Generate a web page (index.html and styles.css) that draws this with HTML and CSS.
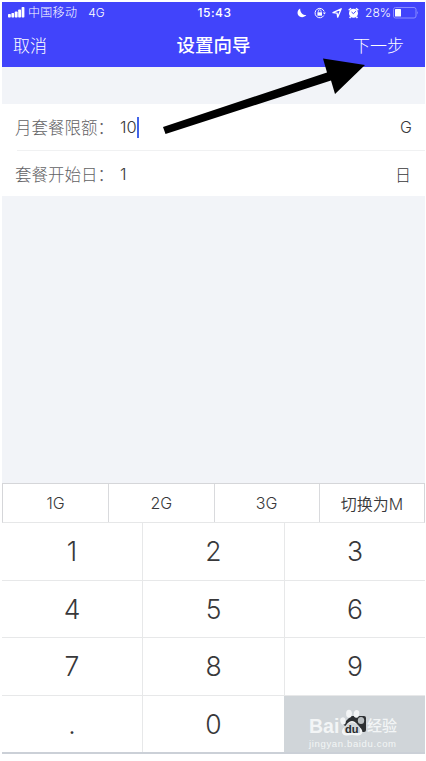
FILE: index.html
```html
<!DOCTYPE html>
<html lang="zh-CN">
<head>
<meta charset="utf-8">
<title>设置向导</title>
<link rel="stylesheet" href="styles.css">
</head>
<body>
<main class="screen">
  <header class="header">
    <div class="status">
      <div class="status-left">
        <svg class="signal" width="17" height="11" viewBox="0 0 17 11" fill="#fff"><rect x="0" y="7" width="2.8" height="3.5" rx=".7"/><rect x="3.4" y="6" width="2.8" height="4.5" rx=".7"/><rect x="6.8" y="4.5" width="2.8" height="6" rx=".7"/><rect x="10.2" y="2.5" width="2.8" height="8" rx=".7"/><rect x="13.6" y="0" width="2.8" height="10.5" rx=".7"/></svg>
        <span class="carrier">中国移动</span>
        <span class="network">4G</span>
      </div>
      <div class="clock">15:43</div>
      <div class="status-right">
        <svg class="moon" width="10" height="10" viewBox="0 0 10 10"><path d="M3.2.4C.8 1.5-.1 4.400 1 6.700 2.300 9.600 6.900 10.300 9.300 7.100 5.900 7.300 2.900 4.200 3.200.4Z" fill="#fff"/></svg>
        <svg class="lock" width="12" height="12" viewBox="0 0 12 12" fill="none" stroke="#fff"><path d="M9.800 8.500A4.700 4.700 0 1 1 10.200 4.500"/><path d="M8.900 5.500h3L10.400 7.600Z" fill="#fff" stroke="none"/><rect x="3.400" y="5.300" width="4.600" height="3.400" fill="#fff" stroke="none"/><path d="M4.300 5.500V4.200a1.400 1.400 0 0 1 2.800 0V5.500" stroke-width=".8"/></svg>
        <svg class="locate" width="10" height="10" viewBox="0 0 10 10"><path d="M9.200.8 5.700 9.200 5.100 5.200 1 4.600Z" fill="none" stroke="#fff" stroke-width="1.300" stroke-linejoin="round"/></svg>
        <svg class="alarm" width="11" height="12" viewBox="0 0 11 12"><circle cx="5.500" cy="6.300" r="4.500" fill="#fff"/><path d="M.7 3.200 3 1.200M10.300 3.200 8 1.200M2.600 9.800 1.600 11M8.400 9.800 9.400 11" stroke="#fff" stroke-width="1.500"/><path d="M3.500 5 5.500 6.700 7.800 4.200" fill="none" stroke="#4144fb" stroke-width="1"/></svg>
        <span class="percent">28%</span>
        <svg class="battery" width="26" height="12" viewBox="0 0 26 12"><rect x=".5" y=".5" width="22.500" height="10.500" rx="2" fill="none" stroke="#8a8cff"/><rect x="2" y="2" width="6" height="7.500" rx=".6" fill="#fff"/><path d="M24 4q1.800 1.800 0 3.600Z" fill="#8a8cff"/></svg>
      </div>
    </div>
    <nav class="nav"><span class="cancel">取消</span><h1>设置向导</h1><span class="next">下一步</span></nav>
  </header>
  <section class="form">
    <div class="field"><label>月套餐限额：</label><span class="value">10<i class="caret"></i></span><span class="unit">G</span></div>
    <div class="field"><label class="label-start">套餐开始日：</label><span class="value">1</span><span class="unit unit-day">日</span></div>
  </section>
  <section class="keyboard">
    <div class="presets"><span>1G</span><span>2G</span><span>3G</span><span>切换为M</span></div>
    <div class="keys">
      <span>1</span><span>2</span><span>3</span>
      <span>4</span><span>5</span><span>6</span>
      <span>7</span><span>8</span><span>9</span>
      <span>.</span><span>0</span>
      <div class="delete">
        <svg class="backspace" width="24" height="18" viewBox="0 0 24 18"><path d="M8 1H21Q23 1 23 3V15Q23 17 21 17H8L0 9Z" fill="#2d3033"/></svg>
        <div class="watermark">
          <div class="brand"><span class="bai">Bai</span>
            <svg class="paw" width="27" height="28" viewBox="0 0 27 28" fill="#f3f5f6"><ellipse cx="4" cy="12" rx="2.700" ry="3.700" transform="rotate(-12 4 12)"/><ellipse cx="10" cy="4.700" rx="2.900" ry="4"/><ellipse cx="17.500" cy="4.800" rx="2.800" ry="3.900" transform="rotate(8 17.500 4.800)"/><ellipse cx="22" cy="11.500" rx="3.200" ry="3.500" fill="#b9bec1"/><path d="M13 12C9 12 8 16 5 18.500 1 22 3 27 8 26.500Q13 25.500 18 26.500C24 27 25 22 21 18.500 18 16 17 12 13 12Z"/><path d="M5 19Q9 13.500 13 13.500 18 14 21 18.500V24H6Z" fill="#d2d6d9"/><text x="6" y="23.500" class="du">du</text></svg>
            <span class="experience">经验</span></div>
          <div class="site">jingyan.baidu.com</div>
        </div>
      </div>
    </div>
  </section>
  <svg class="pointer" width="203" height="78" viewBox="0 0 203 78"><path d="M0 69 164 14.500 160 0.500 202 7 172 36 168 22.500 2.500 76Z" fill="#000"/></svg>
</main>
</body>
</html>
```
FILE: styles.css
```css
* { box-sizing: border-box; }
body {
  margin: 0;
  background: #fff;
  color: #38383a;
  font-family: Inter, "Noto Sans CJK SC", sans-serif;
}
.screen {
  position: relative;
  width: 423px;
  height: 752px;
  margin: 2px 0 0 2px;
  display: flex;
  flex-direction: column;
  background: #f2f4f8;
}
.header { height: 65px; background: #4144fb; color: #fff; }
.status {
  height: 21px;
  display: grid;
  grid-template-columns: 1fr 50px 1fr;
  align-items: center;
  font-size: 12px;
  line-height: 20px;
}
.status-left, .status-right { display: flex; align-items: center; }
.status-left { padding-left: 6px; }
.carrier { margin-left: 3px; font-weight: 300; letter-spacing: .3px; }
.network { margin-left: 11px; font-weight: 300; }
.clock { padding-left: 2px; text-align: center; font-weight: 500; letter-spacing: .5px; }
.status-right { justify-content: flex-end; padding-right: 6px; }
.lock { margin-left: 7px; }
.locate { margin-left: 6px; }
.alarm { margin-left: 6px; }
.percent { margin-left: 6px; font-weight: 300; }
.battery { margin-left: 2px; }
.nav {
  height: 44px;
  display: grid;
  grid-template-columns: 1fr auto 1fr;
  align-items: center;
  padding: 0 21px 2px 11px;
  font-size: 17px;
  font-weight: 300;
}
.nav h1 { margin: 0; font-size: 18.5px; font-weight: 500; transform: translateX(5px); }
.next { text-align: right; }
.form { margin-top: 37px; background: #fff; }
.field {
  height: 46px;
  display: flex;
  align-items: center;
  padding: 0 13px;
  font-size: 16.5px;
  font-weight: 300;
}
.field + .field { position: relative; height: 46px; padding-top: 2px; }
.field + .field::before { content: ""; position: absolute; left: 15px; right: 0; top: 0; height: 1px; background: #f0f1f2; }
label { width: 105px; color: #626264; white-space: nowrap; }
.value { display: flex; align-items: center; font-size: 16.5px; font-weight: 350; }
.caret { width: 2px; height: 21px; background: #4264e8; }
.unit { margin-left: auto; font-size: 16px; font-weight: 350; }
.unit-day { margin-right: 1px; font-weight: 300; }
.keyboard { margin-top: auto; background: #fff; }
.presets {
  height: 40px;
  display: grid;
  grid-template-columns: repeat(4, 1fr);
  border: 1px solid #d5d6d9;
  border-bottom-color: #e6e7e8;
  font-size: 16px;
  font-weight: 350;
}
.presets span { display: flex; align-items: center; justify-content: center; padding-bottom: 1px; }
.presets span + span { border-left: 1px solid #d9dadd; }
.keys {
  height: 231px;
  display: grid;
  grid-template-columns: 140px 142px 141px;
  grid-template-rows: 58px 57px 58px 56px;
  border-bottom: 2px solid #cbd0d7;
  font-size: 26.5px;
  font-weight: 350;
}
.keys > span {
  display: flex;
  align-items: center;
  justify-content: center;
  padding-bottom: 1px;
  border: solid #e7e8e9;
  border-width: 0 0 1px 1px;
}
.keys > span:nth-child(3n+1) { border-left: 0; }
.keys > span:nth-child(n+10) { border-bottom: 0; }
.delete { position: relative; display: flex; align-items: center; justify-content: center; background: #d0d5d9; }
.watermark {
  position: absolute;
  left: 25px;
  top: 12px;
  width: 90px;
  color: #f3f5f6;
  font-family: "Liberation Sans", "Noto Sans CJK SC", sans-serif;
}
.brand { height: 29px; display: flex; align-items: flex-end; line-height: 22px; }
.bai { width: 30px; font-size: 19.5px; font-weight: 700; }
.paw { flex: none; }
.du { font: 700 11px "Liberation Sans", sans-serif; fill: #292c2f; }
.experience { margin-left: 1px; font-size: 15px; font-weight: 500; white-space: nowrap; }
.site { margin-top: 1px; font-size: 9.5px; line-height: 12px; letter-spacing: .65px; white-space: nowrap; }
.pointer { position: absolute; left: 161px; top: 56px; }
```
